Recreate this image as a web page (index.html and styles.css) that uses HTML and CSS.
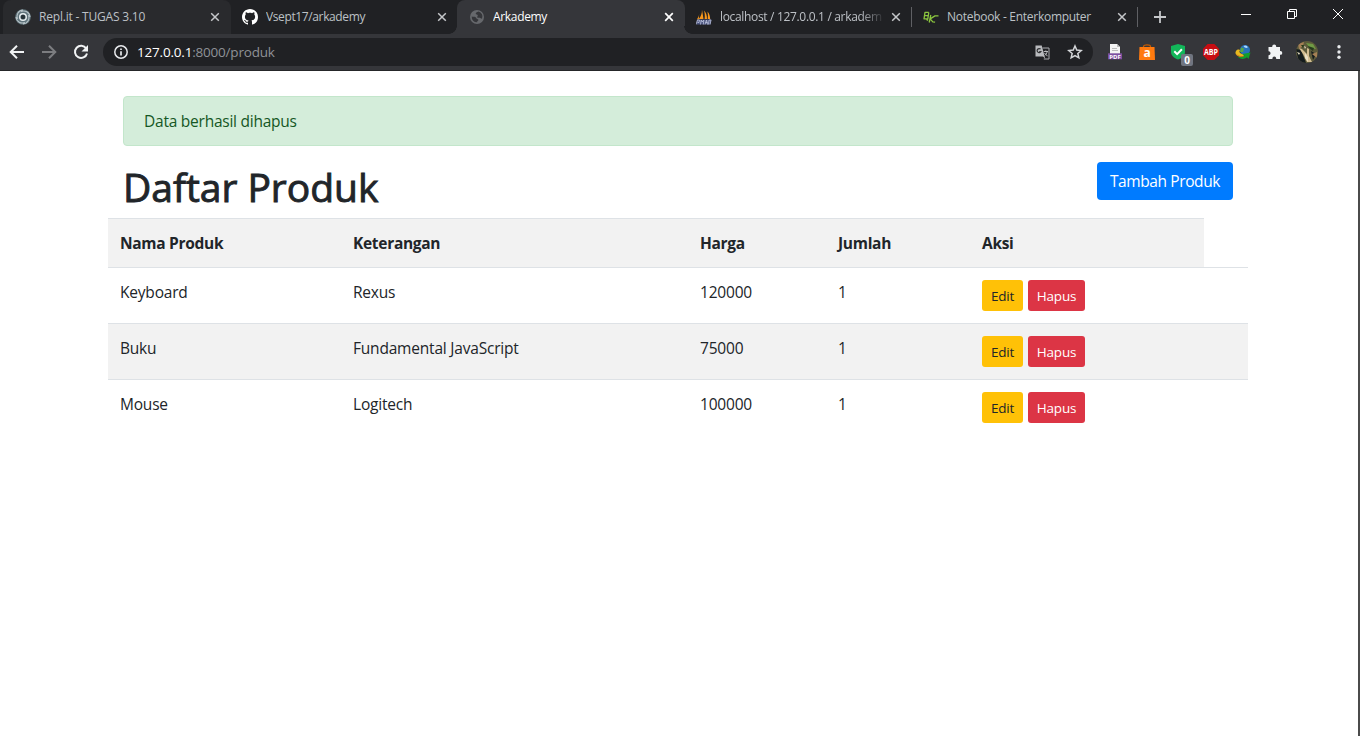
FILE: index.html
```html
<!DOCTYPE html>
<html lang="id">
<head>
<meta charset="utf-8">
<title>Arkademy</title>
<link rel="stylesheet" href="styles.css">
</head>
<body>
<header class="browser">
  <div class="tabs">
    <div class="tab hovered">
      <svg class="fav" viewBox="0 0 16 16"><circle cx="8" cy="8" r="7.8" fill="#5f737b"/><g fill="none" stroke="#b5c1c6" stroke-width="1.100"><path d="M8 1C3 1.500 1 6 2.500 10M15 8C14.500 3 10 1 6 2.500M8 15C13 14.500 15 10 13.500 6M1 8C1.500 13 6 15 10 13.500"/></g><circle cx="8" cy="8" r="3.300" fill="none" stroke="#e8eef0" stroke-width="1.400"/><circle cx="8" cy="8" r="2.200" fill="#263238"/></svg>
      <span class="title t1">Repl.it - TUGAS 3.10</span>
      <svg class="close" viewBox="0 0 10 10"><path d="M1.200 1.200l7.600 7.600M8.800 1.200L1.200 8.800"/></svg>
    </div>
    <div class="tab before">
      <svg class="fav" viewBox="0 0 16 16"><path fill="#fff" d="M8 0C3.580 0 0 3.580 0 8c0 3.540 2.290 6.530 5.470 7.590.4.070.550-.170.550-.380 0-.190-.010-.820-.010-1.490-2.010.370-2.530-.490-2.690-.940-.090-.230-.480-.940-.820-1.130-.280-.150-.680-.520-.010-.530.630-.010 1.080.580 1.230.820.720 1.210 1.870.870 2.330.660.070-.520.280-.870.510-1.070-1.780-.2-3.640-.890-3.640-3.950 0-.870.310-1.590.820-2.150-.080-.2-.360-1.020.080-2.120 0 0 .670-.210 2.200.820.640-.180 1.320-.270 2-.270s1.360.090 2 .270c1.530-1.040 2.200-.820 2.200-.820.440 1.100.160 1.920.080 2.120.510.560.820 1.270.820 2.150 0 3.070-1.870 3.750-3.650 3.950.290.250.540.730.540 1.480 0 1.070-.010 1.930-.010 2.200 0 .210.150.460.550.380A8.010 8.010 0 0 0 16 8c0-4.420-3.580-8-8-8z"/></svg>
      <span class="title t2">Vsept17/arkademy</span>
      <svg class="close" viewBox="0 0 10 10"><path d="M1.200 1.200l7.600 7.600M8.800 1.200L1.200 8.800"/></svg>
    </div>
    <div class="tab active">
      <svg class="fav" viewBox="0 0 16 16"><circle cx="8" cy="8" r="7" fill="#66686c"/><path fill="#35363a" d="M9.500 2.400c-1.600.3-3.200 1.600-2.700 2.700.5.900 1.700.3 2 1.300.2.900-1.100 1.200-.5 2 .7.700 2.200-.1 3.100.5.600.5.900 1 1.700.700A5.300 5.300 0 0 0 9.500 2.400zM2.700 7.600a5.300 5.300 0 0 0 5.500 5.700c-.3-.7.400-1.300 1-1.800.5-.6-.2-1.500-1-1.600-.9-.1-.8-1.200-1.600-1.700-1-.6-2.500-.2-3.900-.6z"/></svg>
      <span class="title t3">Arkademy</span>
      <svg class="close" viewBox="0 0 10 10"><path d="M1.200 1.200l7.600 7.600M8.800 1.200L1.200 8.800"/></svg>
    </div>
    <div class="tab after">
      <svg class="fav" viewBox="0 0 16 16"><path fill="#f8981d" d="M6 .8L7.500 10H2.800C5 7.500 6 4.500 6 .8zM8 1.500c2.200 2.300 3 5 3 8.500H8.600C9 7 8.800 4 8 1.500zM11.500 2.500C13.500 5 14 7 14.200 10h-2.500c.4-2.500.3-5-.2-7.500zM3.200 4.500C3 7 2.300 8.500.8 10.500h2z"/><path fill="#4d5680" d="M1 10.500h14.500l-1 5H.5z"/><path fill="none" stroke="#bcc3dc" stroke-width=".8" d="M0 15.500l1.500-4.500h2L3 13.500H1.500M4.500 15.500l.7-4.500 1 2 1.600-2-.5 4.500M9 15.500l1.500-4.500 1 4.500M9.500 13.500h2M12.500 15.500l.5-4.500h2l-1 4.500"/></svg>
      <span class="title fade t4">localhost / 127.0.0.1 / arkadem</span>
      <svg class="close" viewBox="0 0 10 10"><path d="M1.200 1.200l7.600 7.600M8.800 1.200L1.200 8.800"/></svg>
    </div>
    <div class="tab divided">
      <svg class="fav" viewBox="0 0 16 16"><path fill="none" stroke="#8bc53f" stroke-width="1.300" stroke-linejoin="round" d="M5.800 3.300H2L1 9.800h3.800l1-6.500M1.500 6.600h3.800M7.800 6L6.200 13.500M15.500 6.800l-3.500.1-4.800 3 2.600 3 2.300.3M3.500 10.500l1.500 1"/></svg>
      <span class="title t5">Notebook - Enterkomputer</span>
      <svg class="close" viewBox="0 0 10 10"><path d="M1.200 1.200l7.600 7.600M8.800 1.200L1.200 8.800"/></svg>
    </div>
    <svg class="plus" viewBox="0 0 12 12"><path d="M6 0v12M0 6h12" stroke="#c5c7ca" stroke-width="1.800"/></svg>
    <div class="controls">
      <svg viewBox="0 0 12 12"><path d="M1 6.500h10"/></svg>
      <svg viewBox="0 0 12 12"><path d="M1.500 3.500h7v7h-7zM3.500 3.500v-2h7v7h-2"/></svg>
      <svg viewBox="0 0 12 12"><path d="M1 1l10 10M11 1L1 11"/></svg>
    </div>
  </div>
  <div class="toolbar">
    <svg class="nav" viewBox="0 0 16 16"><path d="M15 8H2M8 1.700L1.700 8 8 14.300"/></svg>
    <svg class="nav dim" viewBox="0 0 16 16"><path d="M1 8h13M8 1.700L14.300 8 8 14.300"/></svg>
    <svg class="nav" viewBox="0 0 16 16"><path d="M13.200 4.500A6.100 6.100 0 1 0 14 9.400"/><path class="solid" d="M15 1v6.500H8.500z"/></svg>
    <div class="omnibox">
      <svg class="info" viewBox="0 0 14 14"><circle cx="7" cy="7" r="6.200" fill="none" stroke="#e8eaed" stroke-width="1.500"/><path d="M7 6.200v4.300M7 3.400V5" stroke="#e8eaed" stroke-width="1.700"/></svg>
      <span class="url"><b>127.0.0.1</b>:8000/produk</span>
      <svg class="trans" viewBox="0 0 15 15"><path fill="none" stroke="#a9abae" d="M7.500 3h6.500v11H8.800"/><path fill="#b9bbbe" d="M.5.500h6.200l3.500 13L8 11.500H.5z"/><path fill="none" stroke="#303134" stroke-width="1.200" d="M5.600 4.200a2 2 0 1 0 .2 2.500H4.200"/><path fill="none" stroke="#b9bbbe" d="M8.800 6.500h4.200M10.800 5.500v1M12.200 6.500c-.3 2-1.500 3.200-2.500 4M9.500 8l3 3.200"/></svg>
      <svg class="star" viewBox="0 0 16 16"><path fill="none" stroke="#d4d6d9" stroke-width="1.500" d="M8 2l1.750 4.100 4.450.400-3.370 2.930 1 4.370L8 11.500l-3.830 2.300 1-4.370L1.800 6.500l4.450-.400z"/></svg>
    </div>
    <div class="extensions">
      <svg viewBox="0 0 16 16"><path fill="#f4f4f4" d="M3 0h7l3 3v9H3z"/><path fill="#bbb" d="M10 0v3h3zM5 4h5v1H5zM5 6h6v1H5z"/><path fill="#7d4fa0" d="M1 9.300h14v6H1z"/><text x="8" y="14.500" class="pdf">PDF</text></svg>
      <svg viewBox="0 0 16 16"><path fill="none" stroke="#c75b00" stroke-width="1.200" d="M4.500 4V2.500c0-2.300 7-2.300 7 0V4"/><path fill="#ff7a0f" d="M.5 3h15l.5 13H0z"/><text x="8" y="12.800" class="bag">a</text></svg>
      <div class="shield"><svg viewBox="0 0 16 16"><path fill="#12b659" d="M7 0l7 2v6c0 3.700-3 6-7 7.500C3 14 0 11.700 0 8V2z"/><path fill="none" stroke="#fff" stroke-width="2" d="M3.300 7.300l2.800 2.800 4.800-4.800"/></svg><span class="count">0</span></div>
      <svg viewBox="0 0 16 16"><path fill="#c70d12" d="M4.700 0h6.600L16 4.700v6.600L11.300 16H4.700L0 11.300V4.700z"/><text x="8" y="10.900" class="abp" textLength="14" lengthAdjust="spacingAndGlyphs">ABP</text></svg>
      <svg viewBox="0 0 16 16"><circle cx="10" cy="6" r="5" fill="#2872b8"/><path fill="#a9d8ff" d="M8.500 2c2-1.300 4-.1 4.300 1.500C11.500 4.500 9.500 4 8.500 2z"/><path fill="#58a844" d="M6 3.500l3 1L8 8 5 8z"/><path fill="#e8b91e" d="M1 7C2.500 4.800 5 5.200 5 6.500 3.500 7.500 5 10 8.500 10.500L9 13C2 13.500-.8 10 1 7z"/><path fill="#c86b20" d="M1.200 9.500c1.300 2 4 2.700 7.500 2.500v1C4.500 13.500 1.500 12 1.200 9.500z"/><path fill="#149d2b" d="M7.500 10l8-1.500-2 6.500-1.500-1.700c-3 2.500-7 2-9.500-.8 3 1 5.500.8 7-.7z"/></svg>
      <svg viewBox="0 0 16 16"><path fill="#f1f3f4" d="M5.200 3V2.600a2 2 0 0 1 4 0V3H13v4h.4a1.900 1.900 0 0 1 0 3.800H13V15H9.200v-.6a1.900 1.900 0 0 0-3.800 0v.6H1.500v-3.800H2A2 2 0 0 0 2 7.300h-.5V3z"/></svg>
      <svg class="avatar" viewBox="0 0 22 22"><clipPath id="round"><circle cx="11" cy="11" r="11"/></clipPath><g clip-path="url(#round)"><path fill="#5d5b3b" d="M0 0h22v22H0z"/><path fill="#141b1d" d="M0 8l5 1 5 13H3zM15 10l5 3-3 6z"/><path fill="#d2bd92" d="M3 7l3 1 5 5 0-6 2 1 0 7 3 6h-5L7 13z"/><path fill="#6f9a44" d="M10 2l7 1 3 5-6-1z"/><path fill="#a58055" d="M2 3l6-2-1 4-4 3zM16 13l5-2v6z"/><path fill="#e9dfc4" d="M1 11l3 1-1 2zM9 12l3 4v5l-3-4zM8 5l2 1-1 2z"/><path fill="#263c1c" d="M12 5l6 2-1 3-4-3zM5 4l3 0-1 3z"/></g></svg>
      <svg class="dots" viewBox="0 0 16 16"><g fill="#e8eaed"><circle cx="8" cy="2.700" r="1.700"/><circle cx="8" cy="8" r="1.700"/><circle cx="8" cy="13.300" r="1.700"/></g></svg>
    </div>
  </div>
</header>
<main class="page">
  <div class="container">
    <div class="alert">Data berhasil dihapus</div>
    <div class="heading">
      <h1>Daftar Produk</h1>
      <a class="btn primary">Tambah Produk</a>
    </div>
    <table class="products">
      <colgroup><col class="c1"><col class="c2"><col class="c3"><col class="c4"><col class="c5"><col class="c6"></colgroup>
      <thead><tr><th>Nama Produk</th><th>Keterangan</th><th>Harga</th><th>Jumlah</th><th>Aksi</th></tr></thead>
      <tbody>
        <tr><td>Keyboard</td><td>Rexus</td><td>120000</td><td>1</td><td colspan="2"><div class="actions"><a class="btn small warn">Edit</a><a class="btn small danger">Hapus</a></div></td></tr>
        <tr class="odd"><td>Buku</td><td>Fundamental JavaScript</td><td>75000</td><td>1</td><td colspan="2"><div class="actions"><a class="btn small warn">Edit</a><a class="btn small danger">Hapus</a></div></td></tr>
        <tr><td>Mouse</td><td>Logitech</td><td>100000</td><td>1</td><td colspan="2"><div class="actions"><a class="btn small warn">Edit</a><a class="btn small danger">Hapus</a></div></td></tr>
      </tbody>
    </table>
  </div>
</main>
</body>
</html>
```
FILE: styles.css
```css
* { box-sizing: border-box; }
body { margin: 0; width: 1360px; height: 736px; overflow: hidden; background: #fff; color: #212529; font: 15.5px/24px "Open Sans", "Noto Sans", sans-serif; letter-spacing: -.2px; }
svg { display: block; flex: none; }

.browser { height: 71px; background: #35363a; border-bottom: 1px solid #252629; }
.tabs { display: flex; height: 34px; padding-left: 3px; background: #202124; }
.tab { display: flex; align-items: center; width: 227px; height: 34px; padding-left: 12px; color: #bdc1c6; font-size: 12px; }
.fav { width: 16px; height: 16px; }
.title { width: 164px; margin-left: 8px; overflow: hidden; white-space: nowrap; line-height: 18px; }
.t1 { letter-spacing: -.2px; }
.t2 { letter-spacing: -.38px; }
.t3 { letter-spacing: -.33px; }
.t4 { letter-spacing: -.33px; }
.t5 { letter-spacing: -.28px; }
.fade { -webkit-mask-image: linear-gradient(90deg, #000 140px, transparent 165px); mask-image: linear-gradient(90deg, #000 140px, transparent 165px); }
.close { width: 10px; height: 10px; margin-left: 7px; fill: none; stroke: #c5c7ca; stroke-width: 1.5; }
.divided .close { margin-left: 6px; }
.hovered { width: 228px; margin-right: -1px; background: #292a2d; border-radius: 8px 8px 0 0; }
.active { width: 228px; margin-right: -1px; background: #35363a; color: #fff; border-radius: 8px 8px 0 0; }
.active .close { stroke: #fff; stroke-width: 1.7; }
.before { background: radial-gradient(circle 8px at 0 0, #202124 7.5px, #35363a 8px) right bottom / 8px 8px no-repeat; }
.after { background: radial-gradient(circle 8px at 8px 0, #202124 7.5px, #35363a 8px) left bottom / 8px 8px no-repeat; }
.divided { background: linear-gradient(#5f6064, #5f6064) left center / 1px 20px no-repeat, linear-gradient(#5f6064, #5f6064) right center / 1px 20px no-repeat; }
.plus { width: 12px; height: 12px; margin: 11px 0 0 16px; }
.controls { display: flex; gap: 34px; margin: 8px 16px 0 auto; }
.controls svg { width: 12px; height: 12px; fill: none; stroke: #fff; stroke-width: 1; }

.toolbar { display: flex; align-items: center; height: 36px; padding-left: 9px; }
.nav { width: 16px; height: 16px; margin-right: 16px; fill: none; stroke: #f1f3f4; stroke-width: 2; }
.nav .solid { fill: #f1f3f4; stroke: none; }
.nav.dim { stroke: #7c7d80; }
.omnibox { display: flex; align-items: center; width: 990px; height: 28px; margin-left: -2px; padding-left: 11px; border-radius: 14px; background: #202124; }
.info { width: 14px; height: 14px; }
.url { margin-left: 9px; color: #8f9297; font-size: 13.5px; letter-spacing: -.2px; white-space: nowrap; }
.url b { color: #fff; font-weight: 400; }
.trans { width: 15px; height: 15px; margin-left: auto; }
.star { width: 16px; height: 16px; margin: 0 10px 0 17px; }
.extensions { display: flex; align-items: center; gap: 16px; margin-left: 14px; letter-spacing: 0; }
.extensions svg { width: 16px; height: 16px; }
.extensions .avatar { width: 22px; height: 22px; margin: 0 -3px; }
.shield { position: relative; }
.count { position: absolute; left: 10px; top: 10px; width: 12px; height: 12px; border-radius: 2px; background: #707580; color: #fff; font: 700 10px/12px "Open Sans", sans-serif; text-align: center; }
.extensions text { font-family: "Open Sans", sans-serif; font-weight: 700; text-anchor: middle; fill: #fff; }
.extensions .pdf { font-size: 6px; }
.extensions .bag { font-size: 12px; }
.extensions .abp { font-size: 8.5px; }

.page { height: 665px; padding: 25px 110px 0 108px; border-right: 2px solid #4b4b4b; }
.container { width: 1140px; }
.alert { height: 50px; margin: 0 15px; padding: 12px 20px; border: 1px solid #c3e6cb; border-radius: 4px; background: #d4edda; color: #155724; letter-spacing: -.24px; }
.heading { display: flex; justify-content: space-between; height: 56px; margin: 16px 15px 0; }
h1 { margin: 0; font: 400 39px/50px "Open Sans", sans-serif; letter-spacing: -.04px; -webkit-text-stroke: .9px #212529; }
.btn { display: flex; align-items: center; justify-content: center; border-radius: 4px; }
.primary { width: 136px; height: 38px; background: #007bff; color: #fff; letter-spacing: -.4px; }
.products { width: 1140px; table-layout: fixed; border-collapse: separate; border-spacing: 0; }
.c1 { width: 233px; }
.c2 { width: 347px; }
.c3 { width: 138px; }
.c4 { width: 144px; }
.c5 { width: 234px; }
.c6 { width: 44px; }
th { height: 49px; padding: 12px; border-top: 1px solid #dee2e6; background: #f2f2f2; text-align: left; font-weight: 700; letter-spacing: -.3px; }
td { height: 56px; padding: 12px; border-top: 1px solid #dee2e6; vertical-align: top; }
.odd td { background: #f2f2f2; }
.actions { display: flex; gap: 5px; }
.small { height: 31px; border-radius: 3px; font-size: 13.5px; }
.warn { width: 41px; background: #ffc107; }
.danger { width: 57px; background: #dc3545; color: #fff; }
```
